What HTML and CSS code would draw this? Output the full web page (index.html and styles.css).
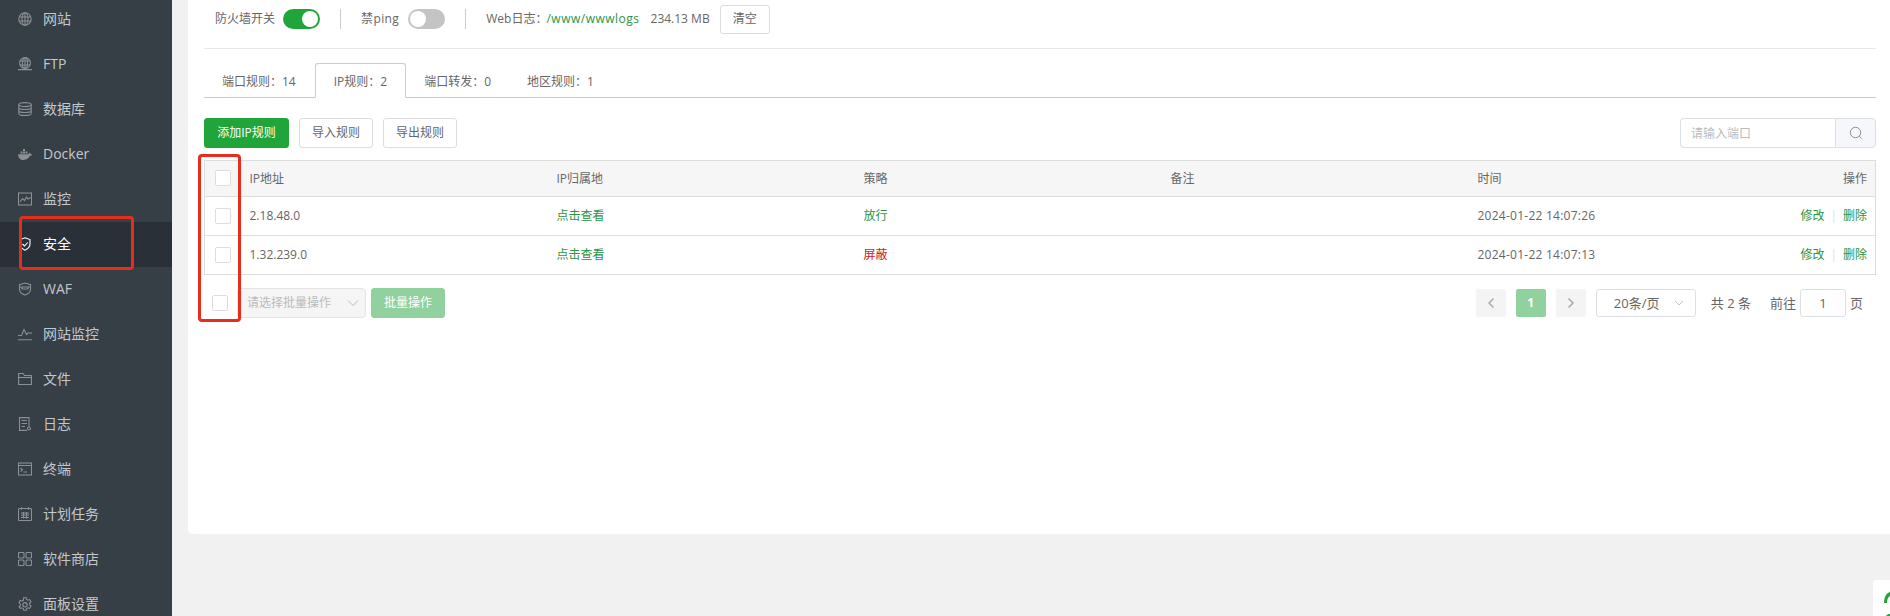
FILE: index.html
```html
<!DOCTYPE html>
<html lang="zh">
<head>
<meta charset="utf-8">
<title>安全</title>
<link rel="stylesheet" href="styles.css">
</head>
<body>
<aside class="sidebar">
  <nav class="nav">
    <a class="nav-item"><svg class="ico" viewBox="0 0 14 14"><circle cx="7" cy="7" r="6.2"/><ellipse cx="7" cy="7" rx="3" ry="6.2"/><path d="M7 .8v12.4M1 5h12M1 9h12"/></svg><span>网站</span></a>
    <a class="nav-item"><svg class="ico" viewBox="0 0 14 14"><circle cx="7" cy="6" r="5.4"/><ellipse cx="7" cy="6" rx="2.6" ry="5.4"/><path d="M7 .6v10.8M1.6 4h10.8M1.6 8h10.8M0 12.6h14"/></svg><span>FTP</span></a>
    <a class="nav-item"><svg class="ico" viewBox="0 0 14 14"><ellipse cx="7" cy="2.6" rx="6.2" ry="2"/><path d="M.8 2.6v8.8c0 1.1 2.8 2 6.2 2s6.2-.9 6.2-2V2.6M.8 5.5c0 1.1 2.8 2 6.2 2s6.2-.9 6.2-2M.8 8.5c0 1.1 2.8 2 6.2 2s6.2-.9 6.2-2"/></svg><span>数据库</span></a>
    <a class="nav-item"><svg class="ico ico-fill" viewBox="0 0 14 14"><path d="M0 7.2h10.6c.2-1 .8-1.4 1.4-1.4.3.5.4 1 .3 1.3.6 0 1.2.1 1.7.4-.5 1.2-1.4 1.6-2.3 1.6C10.8 11.4 8.600 13 5.600 13 2.200 13 .3 10.800 0 7.200z"/><path d="M2.500 4.500h2v2h-2zM5 4.500h2v2H5zM7.500 4.500h2v2h-2zM5 2h2v2H5z"/></svg><span>Docker</span></a>
    <a class="nav-item"><svg class="ico" viewBox="0 0 14 14"><rect x=".5" y="1" width="13" height="12"/><path d="M2 10l2.500-3.500 2 2 2-3.500 1.500 2 2.500-1.500"/></svg><span>监控</span></a>
    <a class="nav-item is-active"><svg class="ico ico-on" viewBox="0 0 14 14"><path d="M7 .8l5 1.800v4.200c0 3-2.200 5.200-5 6.400-2.800-1.200-5-3.400-5-6.400V2.600z"/><path d="M4.500 7l2 2 3.200-3.500"/></svg><span>安全</span></a>
    <a class="nav-item"><svg class="ico" viewBox="0 0 14 14"><path d="M7 1l5.500 1.600v4.600c0 3-2.400 4.800-5.500 5.800-3.100-1-5.500-2.800-5.500-5.800V2.600z"/><path d="M1.500 5h11M4 5v2h6V5"/></svg><span>WAF</span></a>
    <a class="nav-item"><svg class="ico" viewBox="0 0 14 14"><path d="M0 8.500h3.500L6 2.500l2.500 5 1.500-1.500h4M0 12.800h14"/></svg><span>网站监控</span></a>
    <a class="nav-item"><svg class="ico" viewBox="0 0 14 14"><path d="M.6 12.500V1.500h4.400l1.500 2h6.900v9z"/><path d="M.6 5.500h12.800"/></svg><span>文件</span></a>
    <a class="nav-item"><svg class="ico" viewBox="0 0 14 14"><path d="M9 13.400H1.500V.6h9.500v9"/><path d="M3.500 3.500h5.500M3.500 6.500h5.500M3.500 9.500h3.500"/><circle cx="11" cy="11.500" r="1.500"/></svg><span>日志</span></a>
    <a class="nav-item"><svg class="ico" viewBox="0 0 14 14"><rect x=".5" y="1" width="13" height="12"/><path d="M.5 3.500h13M2.500 6l2 1.800-2 1.800M5.500 10h3.500"/></svg><span>终端</span></a>
    <a class="nav-item"><svg class="ico" viewBox="0 0 14 14"><rect x=".5" y="1.500" width="13" height="12" rx="1"/><path d="M3.500.3v2.500M10.500.3v2.500M3 6h8M3 8h8M3 10.500h8M5.500 5v6.500M8.500 5v6.500"/></svg><span>计划任务</span></a>
    <a class="nav-item"><svg class="ico" viewBox="0 0 14 14"><rect x=".5" y=".5" width="5.500" height="5.500" rx="1"/><rect x="8" y=".5" width="5.500" height="5.500" rx="1"/><rect x=".5" y="8" width="5.500" height="5.500" rx="1"/><rect x="8" y="8" width="5.500" height="5.500" rx="1"/></svg><span>软件商店</span></a>
    <a class="nav-item"><svg class="ico" viewBox="0 0 14 14"><path d="M5.700.7h2.600l.4 1.800 1.300.7 1.700-.6 1.300 2.300-1.300 1.200v1.800l1.300 1.200-1.300 2.300-1.700-.6-1.300.7-.4 1.800H5.700l-.4-1.800-1.300-.7-1.700.6L1 9.900l1.300-1.200V6.900L1 5.700l1.300-2.300 1.700.6 1.300-.7z"/><circle cx="7" cy="7.800" r="2.200"/></svg><span>面板设置</span></a>
  </nav>
  <div class="mark mark-nav"></div>
</aside>

<main class="main">
  <section class="card">
    <div class="topbar">
      <span>防火墙开关</span>
      <span class="switch is-on"></span>
      <i class="sep"></i>
      <span class="wide">禁ping</span>
      <span class="switch"></span>
      <i class="sep"></i>
      <span>Web日志：</span><a class="link logs">/www/wwwlogs</a>
      <span class="size">234.13 MB</span>
      <button class="btn btn-clear">清空</button>
    </div>

    <div class="tabs">
      <a class="tab tab-first">端口规则：14</a>
      <a class="tab is-active">IP规则：2</a>
      <a class="tab">端口转发：0</a>
      <a class="tab">地区规则：1</a>
    </div>

    <div class="toolbar">
      <button class="btn btn-primary">添加IP规则</button>
      <button class="btn">导入规则</button>
      <button class="btn">导出规则</button>
      <div class="search">
        <span class="search-input">请输入端口</span>
        <span class="search-btn"><svg viewBox="0 0 14 14"><circle cx="6.500" cy="6.500" r="5.200"/><path d="M10.300 10.300l2.200 2.200"/></svg></span>
      </div>
    </div>

    <table class="rules">
      <thead>
        <tr>
          <th class="col-check"><span class="check"></span></th>
          <th>IP地址</th><th>IP归属地</th><th>策略</th><th>备注</th><th>时间</th><th class="col-op">操作</th>
        </tr>
      </thead>
      <tbody>
        <tr>
          <td class="col-check"><span class="check"></span></td>
          <td>2.18.48.0</td><td><a class="link">点击查看</a></td><td><span class="link">放行</span></td><td></td>
          <td class="date">2024-01-22 14:07:26</td>
          <td class="col-op"><a class="link">修改</a><i class="op-sep">|</i><a class="link">删除</a></td>
        </tr>
        <tr>
          <td class="col-check"><span class="check"></span></td>
          <td>1.32.239.0</td><td><a class="link">点击查看</a></td><td><span class="deny">屏蔽</span></td><td></td>
          <td class="date">2024-01-22 14:07:13</td>
          <td class="col-op"><a class="link">修改</a><i class="op-sep">|</i><a class="link">删除</a></td>
        </tr>
      </tbody>
    </table>

    <div class="footer">
      <span class="check"></span>
      <span class="batch-select">请选择批量操作<svg viewBox="0 0 12 12"><path d="M1 3.500l5 5 5-5"/></svg></span>
      <button class="btn btn-batch">批量操作</button>
      <div class="pager">
        <span class="page page-off"><svg viewBox="0 0 8 12"><path d="M6.500 1.500L2 6l4.500 4.500"/></svg></span>
        <span class="page page-now">1</span>
        <span class="page page-off"><svg viewBox="0 0 8 12"><path d="M1.500 1.500L6 6l-4.500 4.500"/></svg></span>
        <span class="per-page">20条/页<svg viewBox="0 0 12 12"><path d="M2 4l4 4 4-4"/></svg></span>
        <span class="total">共 2 条</span>
        <span class="goto">前往</span>
        <span class="page-input">1</span>
        <span>页</span>
      </div>
    </div>
    <div class="mark mark-col"></div>
  </section>
</main>

<div class="corner"><svg viewBox="0 0 17 36"><path d="M11 23c0-6 2.500-10 6-11v4c-1.500.8-3 3-3 7z"/><path d="M13 36c1-1.500 2.500-2 4-2v2z"/></svg></div>
</body>
</html>
```

FILE: styles.css
```css
* { box-sizing: border-box; }
html, body { height: 100%; }
body {
  margin: 0;
  display: flex;
  overflow: hidden;
  background: #f1f1f1;
  color: #666;
  font: 12px/1.4 "Open Sans", "Noto Sans CJK SC", sans-serif;
}
button { font: inherit; cursor: pointer; }
a { text-decoration: none; }
i { font-style: normal; }

.sidebar { position: relative; flex: 0 0 172px; background: #363e46; overflow: hidden; }
.nav { margin-top: -3px; }
.nav-item {
  display: flex;
  align-items: center;
  gap: 11px;
  height: 45px;
  padding: 0 0 2px 18px;
  color: #c3c8cb;
  font-size: 14px;
}
.nav-item.is-active { background: #2a3038; color: #fff; }
.ico { flex: none; width: 14px; height: 14px; fill: none; stroke: #8b9094; stroke-width: 1.1; }
.ico-fill { fill: #8b9094; stroke: none; }
.ico-on { stroke: #fff; }

.mark { position: absolute; border: 3px solid #e62e1f; border-radius: 4px; pointer-events: none; }
.mark-nav { left: 19px; top: 216px; width: 115px; height: 54px; }
.mark-col { left: 10px; top: 154px; width: 43px; height: 168px; }

.main { flex: 1; min-width: 0; padding-left: 16px; }
.card {
  position: relative;
  height: 534px;
  padding: 4px 14px 0 16px;
  background: #fff;
  border-radius: 0 0 0 5px;
}
.topbar {
  display: flex;
  align-items: center;
  height: 45px;
  padding: 0 0 14px 11px;
  border-bottom: 1px solid #e8e8e8;
}
.switch {
  position: relative;
  width: 37px;
  height: 20px;
  margin-left: 8px;
  border-radius: 10px;
  background: #c4c4c4;
}
.switch::after {
  content: "";
  position: absolute;
  left: 2px;
  top: 2px;
  width: 16px;
  height: 16px;
  border-radius: 50%;
  background: #fff;
}
.switch.is-on { background: #20a53a; }
.switch.is-on::after { left: 19px; }
.sep { width: 1px; height: 20px; margin: 0 20px; background: #ccc; }
.wide { margin-right: 1px; letter-spacing: .4px; }
.link { color: #2b9443; }
.deny { color: #c91a1a; }
.logs { margin-left: -1px; letter-spacing: .5px; }
.size { margin-left: 11px; }

.btn {
  width: 74px;
  height: 30px;
  padding: 1px 0 0;
  margin-left: 10px;
  color: #666;
  background: #fff;
  border: 1px solid #ddd;
  border-radius: 3px;
}
.btn-clear { width: 50px; height: 29px; padding: 0; }
.btn-primary { width: 85px; margin-left: 0; color: #fff; background: #20a53a; border-color: #20a53a; }
.btn-batch { width: 74px; margin-left: 5px; color: #fff; background: #90d19d; border-color: #90d19d; }

.tabs { display: flex; height: 35px; margin-top: 14px; border-bottom: 1px solid #ccc; }
.tab {
  display: flex;
  align-items: center;
  height: 35px;
  padding: 3px 17px 0;
  color: #666;
  border: 1px solid transparent;
  border-bottom: 0;
}
.tab-first { padding-right: 18px; }
.tab.is-active {
  padding: 3px 18px 0;
  background: #fff;
  border-color: #ccc;
  border-bottom: 1px solid #fff;
  border-radius: 3px 3px 0 0;
}

.toolbar { display: flex; align-items: center; margin-top: 20px; }
.search { display: flex; height: 30px; margin-left: auto; width: 196px; }
.search-input {
  flex: 1;
  padding: 0 10px;
  line-height: 30px;
  color: #bbb;
  border: 1px solid #dcdfe6;
  border-right: 0;
  border-radius: 4px 0 0 4px;
}
.search-btn {
  display: flex;
  align-items: center;
  justify-content: center;
  width: 41px;
  background: #f5f7fa;
  border: 1px solid #dcdfe6;
  border-radius: 0 4px 4px 0;
}
.search-btn svg { width: 14px; height: 14px; fill: none; stroke: #8a8e95; }

.rules {
  width: 1672px;
  margin-top: 12px;
  table-layout: fixed;
  border-collapse: collapse;
  border: 1px solid #ddd;
}
.rules th, .rules td { padding: 0 8px; text-align: left; font-weight: 400; color: #666; }
.rules th { height: 36px; padding-top: 2px; background: #f6f6f6; border-bottom: 1px solid #ddd; }
.rules td { height: 39px; border-bottom: 1px solid #ddd; }
.rules th:nth-child(n+2) { width: 307px; }
.rules .col-check { width: 37px; padding: 0 0 0 10px; }
.rules th.col-check { padding-bottom: 1px; }
.rules th.col-op, .rules td.col-op { width: auto; text-align: right; }
.rules .date { letter-spacing: .25px; }
.rules .link { color: #2b9443; }
.rules .deny { color: #c91a1a; }
.op-sep { margin: 0 6px; color: #ddd; }
.check {
  display: block;
  flex: none;
  width: 16px;
  height: 16px;
  background: #fff;
  border: 1px solid #ddd;
  border-radius: 2px;
}

.footer { display: flex; align-items: center; height: 30px; margin-top: 13px; padding: 0 13px 0 8px; }
.batch-select {
  display: flex;
  align-items: center;
  justify-content: space-between;
  width: 129px;
  height: 30px;
  margin-left: 9px;
  padding: 0 6px 0 9px;
  color: #bbb;
  background: #f5f5f5;
  border: 1px solid #e4e4e4;
  border-radius: 4px;
}
.batch-select svg { width: 12px; height: 12px; fill: none; stroke: #bbb; }
.pager { display: flex; align-items: center; margin-left: auto; }
.page {
  display: flex;
  align-items: center;
  justify-content: center;
  width: 30px;
  height: 28px;
  margin-right: 10px;
  border-radius: 2px;
  font-weight: 700;
}
.page svg { width: 8px; height: 12px; fill: none; stroke: #aaa; stroke-width: 1.5; }
.page-off { background: #f4f4f5; }
.page-now { color: #fff; background: #90d19d; }
.per-page {
  display: flex;
  align-items: center;
  width: 100px;
  height: 28px;
  padding: 0 10px 0 17px;
  font-size: 13px;
  border: 1px solid #dcdfe6;
  border-radius: 3px;
}
.per-page svg { width: 12px; height: 12px; margin-left: auto; fill: none; stroke: #c0c4cc; }
.total { margin: 0 19px 0 15px; font-size: 13px; }
.goto { margin-right: 4px; font-size: 13px; }
.page-input {
  width: 46px;
  height: 28px;
  margin-right: 4px;
  line-height: 26px;
  text-align: center;
  font-size: 13px;
  border: 1px solid #dcdfe6;
  border-radius: 3px;
}
.pager > span:last-child { font-size: 13px; }

.corner {
  position: fixed;
  right: 0;
  bottom: 0;
  width: 17px;
  height: 36px;
  background: #fff;
  border-radius: 4px 0 0 0;
}
.corner svg { display: block; width: 17px; height: 36px; fill: #20a53a; }
```
